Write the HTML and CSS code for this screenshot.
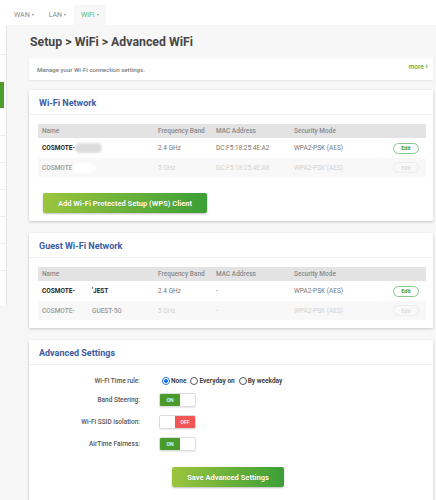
FILE: index.html
```html
<!DOCTYPE html>
<html>
<head>
<meta charset="utf-8">
<link rel="stylesheet" href="styles.css">
</head>
<body>
<div class="nav">
  <div class="tab">WAN<span class="caret"></span></div>
  <div class="tab">LAN<span class="caret"></span></div>
  <div class="tab active">WiFi<span class="caret"></span></div>
</div>
<div class="layout">
  <aside class="side">
    <div class="side-item first"></div>
    <div class="side-item"></div>
    <div class="side-item"><span class="side-on"></span></div>
    <div class="side-item"></div>
    <div class="side-item"></div>
    <div class="side-item"></div>
    <div class="side-item"></div>
    <div class="side-item"></div>
    <div class="side-item"></div>
    <div class="side-item last"></div>
  </aside>
  <main class="main">
    <h1 class="page-title">Setup &gt; WiFi &gt; Advanced WiFi</h1>
    <div class="desc"><span>Manage your Wi-Fi connection settings.</span><span class="more">more <b class="chev">&rsaquo;</b></span></div>

    <section class="card">
      <h2 class="card-title">Wi-Fi Network</h2>
      <div class="card-body">
        <div class="tr th"><span>Name</span><span>Frequency Band</span><span>MAC Address</span><span>Security Mode</span><span></span></div>
        <div class="tr row"><span class="name">COSMOTE-<i class="blob"></i></span><span>2.4 GHz</span><span>DC:F5:18:25:4E:A2</span><span>WPA2-PSK (AES)</span><span class="ecell"><span class="edit">Edit</span></span></div>
        <div class="tr row dim"><span class="name">COSMOTE<i class="blob white"></i></span><span>5 GHz</span><span>DC:F5:18:25:4E:A6</span><span>WPA2-PSK (AES)</span><span class="ecell"><span class="edit">Edit</span></span></div>
        <button class="btn-green wps">Add Wi-Fi Protected Setup (WPS) Client</button>
      </div>
    </section>

    <section class="card gap">
      <h2 class="card-title">Guest Wi-Fi Network</h2>
      <div class="card-body">
        <div class="tr th"><span>Name</span><span>Frequency Band</span><span>MAC Address</span><span>Security Mode</span><span></span></div>
        <div class="tr row"><span class="name"><span class="nm-a">COSMOTE-</span>'JEST</span><span>2.4 GHz</span><span>-</span><span>WPA2-PSK (AES)</span><span class="ecell"><span class="edit">Edit</span></span></div>
        <div class="tr row dim"><span class="name"><span class="nm-a">COSMOTE-</span>GUEST-5G</span><span>5 GHz</span><span>-</span><span>WPA2-PSK (AES)</span><span class="ecell"><span class="edit">Edit</span></span></div>
      </div>
    </section>

    <section class="card gap last-card">
      <h2 class="card-title">Advanced Settings</h2>
      <div class="settings">
        <div class="set-row time">
          <span class="label">Wi-Fi Time rule:</span>
          <span class="radios">
            <span class="radio checked"></span><span class="rlabel">None</span>
            <span class="radio"></span><span class="rlabel">Everyday on</span>
            <span class="radio"></span><span class="rlabel">By weekday</span>
          </span>
        </div>
        <div class="set-row">
          <span class="label">Band Steering:</span>
          <span class="toggle"><span class="t-on">ON</span><span class="t-blank"></span></span>
        </div>
        <div class="set-row">
          <span class="label">Wi-Fi SSID isolation:</span>
          <span class="toggle"><span class="t-blank off"></span><span class="t-off">OFF</span></span>
        </div>
        <div class="set-row">
          <span class="label">AirTime Fairness:</span>
          <span class="toggle"><span class="t-on">ON</span><span class="t-blank"></span></span>
        </div>
        <button class="btn-green save">Save Advanced Settings</button>
      </div>
    </section>
  </main>
</div>
</body>
</html>
```

FILE: styles.css
```css
html, body {
  margin: 0;
  padding: 0;
}
body {
  font-family: Roboto, "Liberation Sans", sans-serif;
  background: #f7f7f7;
  width: 436px;
  height: 500px;
  overflow: hidden;
}

.nav {
  height: 25px;
  background: #fff;
  display: flex;
  gap: 1px;
  padding: 5px 0 0 7px;
  box-sizing: border-box;
}
.tab {
  display: flex;
  align-items: center;
  gap: 2px;
  height: 20px;
  padding: 0 7px;
  font-size: 7px;
  color: #8a8a8a;
}
.tab.active {
  background: #f7f7f7;
  color: #5cb85c;
}
.caret {
  width: 0;
  height: 0;
  border-left: 1.5px solid transparent;
  border-right: 1.5px solid transparent;
  border-top: 2px solid currentColor;
}

.layout {
  display: flex;
  align-items: flex-start;
}
.side {
  flex: none;
  width: 6px;
  background: #fff;
  border-right: 1px solid #e6e6e6;
}
.side-item {
  height: 27px;
  border-bottom: 1px solid #efefef;
  box-sizing: border-box;
}
.side-item.first { height: 30px; }
.side-item.last { height: 34px; border-bottom: 0; }
.side-on {
  display: block;
  width: 4px;
  height: 100%;
  background: #4e9d2d;
}

.main {
  flex: 1;
  min-width: 0;
  padding: 8px 3px 0 22px;
}
.page-title {
  margin: 0 0 7px 1px;
  font-size: 12.3px;
  line-height: 18px;
  font-weight: 700;
  color: #474747;
}
.desc {
  height: 22px;
  background: #fff;
  box-shadow: 0 1px 2px rgba(0, 0, 0, 0.08);
  display: flex;
  justify-content: space-between;
  align-items: center;
  padding: 0 5px 0 8px;
  font-size: 6.1px;
  font-weight: 500;
  color: #7a7a7a;
}
.more {
  align-self: flex-start;
  padding-top: 5px;
  color: #5aa845;
  font-size: 6.5px;
}
.chev {
  font-size: 9px;
  line-height: 6px;
}

.card {
  background: #fff;
  margin-top: 10px;
  box-shadow: 0 1px 3px rgba(0, 0, 0, 0.2);
  border-radius: 1px;
}
.card.gap { margin-top: 12px; }
.last-card { height: 200px; }
.card-title {
  margin: 0;
  height: 25px;
  line-height: 26px;
  padding-left: 10px;
  font-size: 9px;
  font-weight: 700;
  color: #3b5ba5;
  border-bottom: 1px solid #f1f1f1;
  box-sizing: border-box;
}
.card-body {
  padding: 9px 7px 8px 9px;
}

.tr {
  display: grid;
  grid-template-columns: 116px 58px 78px 96px 40px;
  align-items: center;
  font-size: 6.5px;
}
.tr > span { padding-left: 4px; white-space: nowrap; }
.tr > span.ecell { padding-left: 7px; }
.th {
  height: 14px;
  background: #e3e3e3;
  color: #8a8a8a;
  font-weight: 500;
}
.row {
  height: 20px;
  color: #777;
}
.row.dim {
  height: 19px;
  background: #f8f8f8;
  color: #d2d2d2;
}
.name {
  font-weight: 700;
  color: #222;
}
.dim .name {
  font-weight: 500;
  color: #9a9a9a;
}
.blob {
  display: inline-block;
  width: 27px;
  height: 10px;
  border-radius: 5px;
  background: #dcdcdc;
  filter: blur(1.2px);
  vertical-align: middle;
}
.blob.white { background: #fff; width: 24px; }
.nm-a {
  display: inline-block;
  width: 50px;
}
.edit {
  display: flex;
  align-items: center;
  justify-content: center;
  width: 26px;
  height: 11px;
  border: 1px solid #86c986;
  border-radius: 6px;
  box-sizing: border-box;
  color: #479c35;
  font-size: 5.5px;
  font-weight: 700;
}
.dim .edit {
  border-color: #ececec;
  color: #d8d8d8;
  font-weight: 500;
}

.btn-green {
  display: block;
  height: 20px;
  border: 0;
  border-radius: 2px;
  padding: 0;
  background: linear-gradient(to right, #9bc53d, #3b9f37);
  box-shadow: 0 1px 2px rgba(0, 0, 0, 0.25);
  color: #fff;
  font-family: Roboto, "Liberation Sans", sans-serif;
  font-size: 7.5px;
  font-weight: 700;
  text-shadow: 0 0 1px rgba(0, 0, 0, 0.2);
}
.wps {
  width: 164px;
  margin: 16px 0 0 5px;
}
.save {
  width: 112px;
  margin: 16px 0 0 143px;
}

.settings {
  padding-top: 9px;
}
.set-row {
  display: flex;
  align-items: center;
  height: 14px;
}
.set-row + .set-row { margin-top: 8px; }
.set-row.time { margin-bottom: -3px; }
.label {
  width: 111px;
  text-align: right;
  font-size: 6.5px;
  font-weight: 500;
  color: #555;
  flex: none;
}
.radios {
  display: flex;
  align-items: center;
  margin-left: 22px;
}
.radio {
  width: 8px;
  height: 8px;
  border-radius: 50%;
  border: 1px solid #555;
  box-sizing: border-box;
  background: #fff;
  flex: none;
}
.radio.checked {
  border-color: #1a73e8;
  background: radial-gradient(circle, #1a73e8 0 42%, #fff 48%);
}
.rlabel {
  margin: 0 4px 0 1px;
  font-size: 6.5px;
  font-weight: 700;
  color: #444;
}
.toggle {
  display: flex;
  width: 37px;
  height: 14px;
  margin-left: 19px;
  border: 1px solid #dcdcdc;
  border-radius: 2px;
  box-sizing: border-box;
  overflow: hidden;
  background: #fff;
  box-shadow: 0 1px 1px rgba(0, 0, 0, 0.08);
}
.t-on, .t-off {
  display: flex;
  align-items: center;
  justify-content: center;
  width: 20px;
  color: #fff;
  font-size: 5px;
  font-weight: 500;
}
.t-on { background: #4a9a2c; }
.t-off { background: #f25656; }
.t-blank { flex: 1; }
```
